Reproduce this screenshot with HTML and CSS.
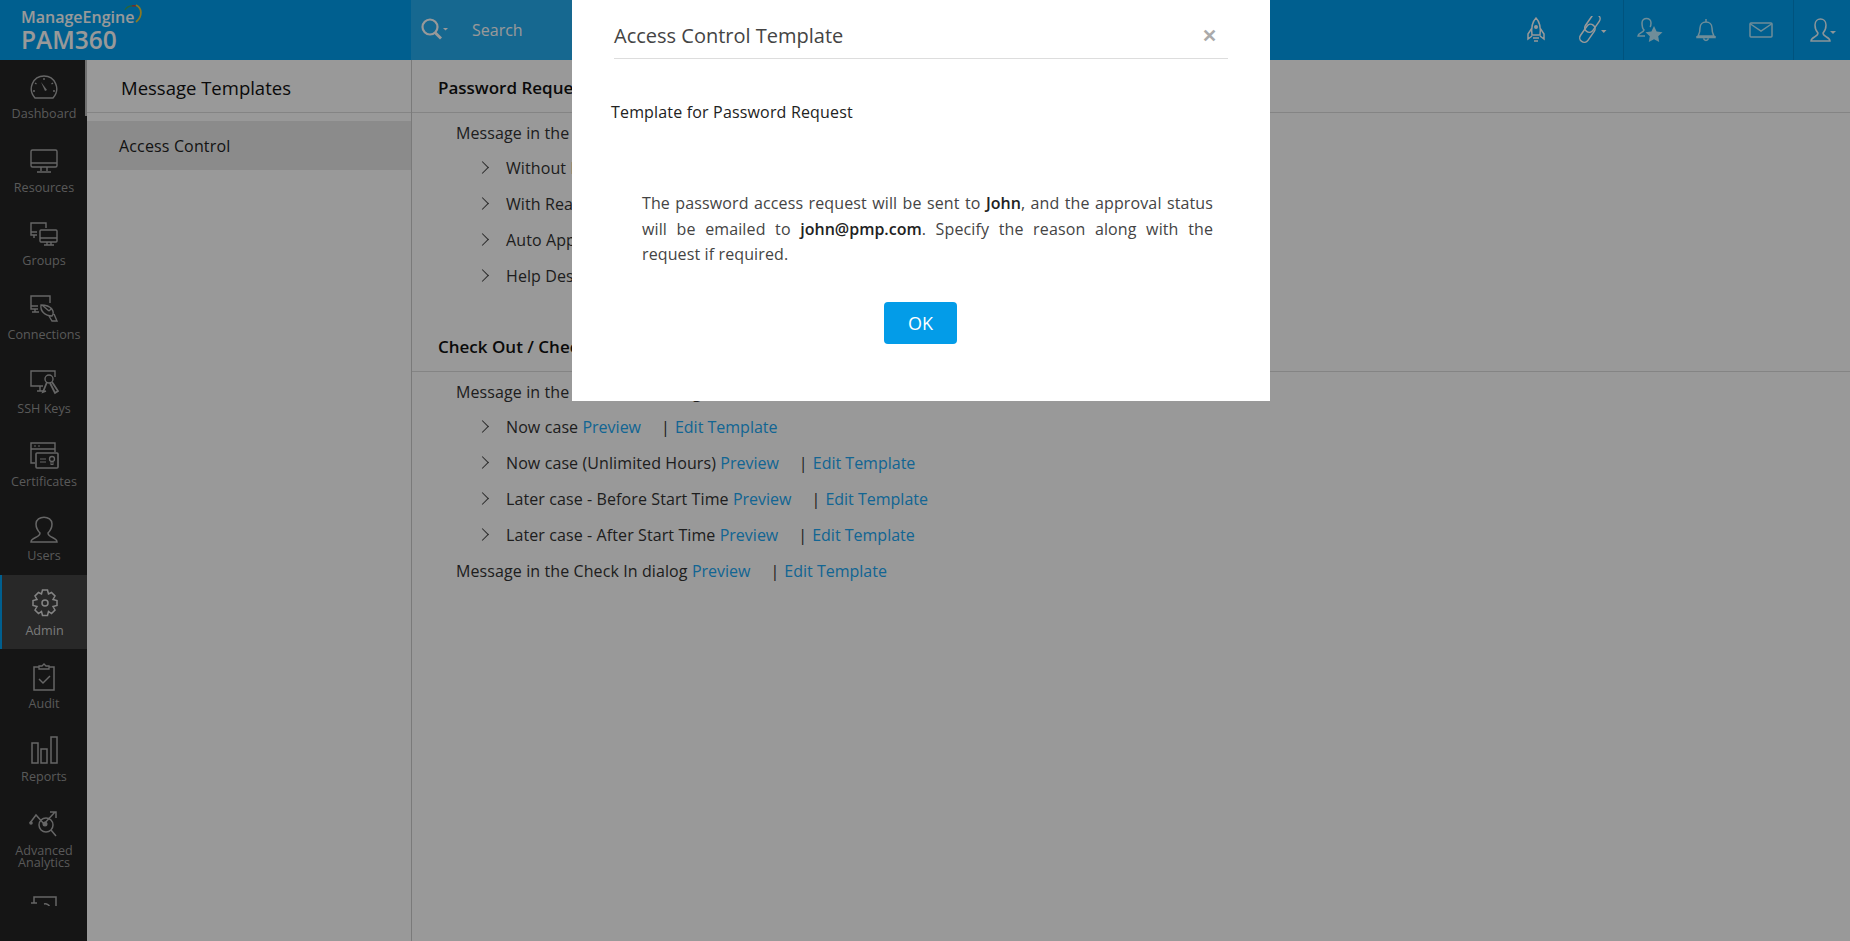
FILE: index.html
```html
<!DOCTYPE html>
<html lang="en">
<head>
    <meta charset="UTF-8">
    <title>PAM360 - Message Templates</title>
    <link rel="stylesheet" href="styles.css">
</head>
<body>
    <!-- Top bar -->
    <header class="topbar">
        <div class="brand">
            <div class="brand-top">ManageEngine<svg class="brand-arc" viewBox="0 0 20 20" width="20" height="20"><path d="M2 6a8 8 0 0 1 7-4" fill="none" stroke="#3fa866" stroke-width="1.4"/><path d="M9 2a8 8 0 0 1 4 0" fill="none" stroke="#c84a3a" stroke-width="1.4"/><path d="M13 1c6 3 7 11 0 17" fill="none" stroke="#e6c83a" stroke-width="1.8"/></svg></div>
            <div class="brand-name">PAM360</div>
        </div>
        <div class="search">
            <svg viewBox="0 0 30 24" width="30" height="24"><circle cx="11" cy="10" r="7.500" fill="none" stroke="#fff" stroke-width="2.200"/><path d="M16 15.500l6 6" stroke="#fff" stroke-width="2.800"/><path d="M24 11h5l-2.500 2.500z" fill="#fff"/></svg>
            <span>Search</span>
        </div>
        <div class="top-icons">
            <div class="top-group top-first">
                <svg viewBox="0 0 24 28" width="24" height="28"><path d="M12 2c4 4 5 9 4 17H8C7 11 8 6 12 2zM8 12l-4 6v5l4-3M16 12l4 6v5l-4-3M9 22h6M10 25h4" fill="none" stroke="#fff" stroke-width="1.500"/><circle cx="12" cy="11" r="2" fill="#fff"/></svg>
                <svg viewBox="0 0 30 28" width="30" height="28"><rect x="11" y="-3" width="9" height="20" rx="4.500" transform="rotate(35 15 7)" fill="none" stroke="#fff" stroke-width="1.500"/><rect x="6" y="7" width="9" height="20" rx="4.500" transform="rotate(35 10 17)" fill="none" stroke="#fff" stroke-width="1.500"/><path d="M24 14h5.500l-2.750 3z" fill="#fff"/></svg>
            </div>
            <div class="top-group top-mid">
                <svg viewBox="0 0 26 26" width="26" height="26"><path d="M8 19H1c0-3 5-3 6-6-2-2-2-5-2-7 0-6 9-6 9 0 0 1 0 3-1 4" fill="none" stroke="#b9ecff" stroke-width="1.500"/><path d="M17 9l2.600 5.400 5.900.8-4.300 4.100 1 5.700-5.200-2.800-5.200 2.800 1-5.700-4.300-4.100 5.900-.8z" fill="#b9ecff"/></svg>
                <svg viewBox="0 0 24 26" width="24" height="26"><path d="M4 19c1-2 2-3 2-8 0-4 3-6 6-6s6 2 6 6c0 5 1 6 2 8zM3 19v1.500h18V19M9.500 21.500c1 2.500 4 2.500 5 0M12 5V2" fill="none" stroke="#b9ecff" stroke-width="1.500"/></svg>
                <svg viewBox="0 0 24 18" width="24" height="18"><rect x="1" y="2" width="22" height="14" rx="1" fill="none" stroke="#b9ecff" stroke-width="1.500"/><path d="M1.500 3l10.500 7 10.500-7" fill="none" stroke="#b9ecff" stroke-width="1.500"/></svg>
            </div>
            <div class="top-group top-last">
                <svg viewBox="0 0 26 26" width="26" height="26"><path d="M1 24c0-4 7-4 7-8-2-2-3-5-3-8 0-8 11-8 11 0 0 3-1 6-3 8 0 4 7 4 7 8z" fill="none" stroke="#e8f8ff" stroke-width="1.500"/><path d="M20 14h6l-3 3z" fill="#e8f8ff"/></svg>
            </div>
        </div>
    </header>

    <div class="main">
        <!-- Left navigation -->
        <aside class="sidenav">
            <div class="nav-thumb"></div>
            <div class="nav-list">
                <a class="nav-item">
                    <svg viewBox="0 0 30 26" width="30" height="26"><path d="M6 24C-2 15 4 2 15 2s17 13 9 22z" fill="none" stroke="currentColor" stroke-width="1.400"/><path d="M12 8l4 9 2-1z" fill="currentColor"/><path d="M15 4v2M6 9l1.500 1M24 9l-1.500 1M4 17h2M24 17h2" stroke="currentColor" stroke-width="1.400"/></svg>
                    <span>Dashboard</span>
                </a>
                <a class="nav-item">
                    <svg viewBox="0 0 30 26" width="30" height="26"><rect x="2" y="2" width="26" height="17" rx="1.500" fill="none" stroke="currentColor" stroke-width="1.400"/><path d="M2 15h26M12 19v4M18 19v4M8 24h14" stroke="currentColor" stroke-width="1.400"/></svg>
                    <span>Resources</span>
                </a>
                <a class="nav-item">
                    <svg viewBox="0 0 30 26" width="30" height="26"><path d="M8 14H2V2h15v5M2 11h6M5 14v3" fill="none" stroke="currentColor" stroke-width="1.400"/><rect x="11" y="9" width="17" height="12" rx="1" fill="none" stroke="currentColor" stroke-width="1.400"/><path d="M11 17h17M18 21v3M22 21v3M15 24h10" stroke="currentColor" stroke-width="1.400"/></svg>
                    <span>Groups</span>
                </a>
                <a class="nav-item">
                    <svg viewBox="0 0 30 28" width="30" height="28"><path d="M9 15H2V2h19v7M2 12h7M6 15v3M3 18h7" fill="none" stroke="currentColor" stroke-width="1.400"/><path d="M12 11c-1 6 4 11 11 11 3-4 0-11-11-11zM13 11l7 6M20 17l3-3M20 22l3 5h5l-3-7" fill="none" stroke="currentColor" stroke-width="1.400"/></svg>
                    <span>Connections</span>
                </a>
                <a class="nav-item">
                    <svg viewBox="0 0 30 26" width="30" height="26"><path d="M14 17H2V2h24v6M8 22h7M11 17v5" fill="none" stroke="currentColor" stroke-width="1.400"/><circle cx="20" cy="10" r="4" fill="none" stroke="currentColor" stroke-width="1.400"/><path d="M18 13l-4 10 3-1M21 14l5 10 3-2-6-9" fill="none" stroke="currentColor" stroke-width="1.800"/></svg>
                    <span>SSH Keys</span>
                </a>
                <a class="nav-item">
                    <svg viewBox="0 0 30 28" width="30" height="28"><path d="M6 22H2V2h24v9M2 8h24" fill="none" stroke="currentColor" stroke-width="1.400"/><rect x="7" y="12" width="22" height="15" rx="1" fill="none" stroke="currentColor" stroke-width="1.600"/><path d="M11 18h6M11 21h6M5 5h2M9 5h2" stroke="currentColor" stroke-width="1.200"/><circle cx="23" cy="18" r="2.500" fill="none" stroke="currentColor" stroke-width="1.300"/><path d="M22 21v3l1-1 1 1v-3" fill="none" stroke="currentColor"/></svg>
                    <span>Certificates</span>
                </a>
                <a class="nav-item">
                    <svg viewBox="0 0 30 28" width="30" height="28"><path d="M2 27c0-5 9-4 9-9-3-3-4-6-4-9 0-9 16-9 16 0 0 3-1 6-4 9 0 5 9 4 9 9z" fill="none" stroke="currentColor" stroke-width="1.500"/></svg>
                    <span>Users</span>
                </a>
                <a class="nav-item active">
                    <svg viewBox="0 0 30 28" width="30" height="28"><path d="M12.500 1h5l1 4 3-1.500 3.500 3.500-2 3.500 4 1v5l-4 1 2 3.500-3.500 3.500-3-2-1 4h-5l-1-4-3 2L5 21l2-3.500-4-1v-5l4-1L5 7l3.500-3.500 3 1.500z" fill="none" stroke="currentColor" stroke-width="1.500"/><circle cx="15" cy="14" r="3" fill="none" stroke="currentColor" stroke-width="1.500"/></svg>
                    <span>Admin</span>
                </a>
                <a class="nav-item">
                    <svg viewBox="0 0 30 28" width="30" height="28"><path d="M10 4H5v23h20V4h-5" fill="none" stroke="currentColor" stroke-width="1.500"/><path d="M10 6V3h3l2-2 2 2h3v3z" fill="none" stroke="currentColor" stroke-width="1.300"/><path d="M10 16l4 4 7-7" fill="none" stroke="currentColor" stroke-width="1.500"/></svg>
                    <span>Audit</span>
                </a>
                <a class="nav-item">
                    <svg viewBox="0 0 30 28" width="30" height="28"><path d="M3 27V7h6v20zM12 27V13h6v14zM22 27V1h6v26z" fill="none" stroke="currentColor" stroke-width="1.500"/></svg>
                    <span>Reports</span>
                </a>
                <a class="nav-item nav-two">
                    <svg viewBox="0 0 30 28" width="30" height="28"><circle cx="17" cy="15" r="7" fill="none" stroke="currentColor" stroke-width="1.500"/><path d="M22 20l5 6M1 13l6-8 8 9 11-12M21 2h6v6" fill="none" stroke="currentColor" stroke-width="1.500"/><circle cx="2" cy="13" r="1.800" fill="currentColor"/><circle cx="16" cy="14" r="2.500" fill="currentColor"/></svg>
                    <span>Advanced Analytics</span>
                </a>
                <a class="nav-item">
                    <svg viewBox="0 0 30 28" width="30" height="28"><path d="M5 8V2h22v24H5M2 8h6M15 9a5 5 0 0 1 6 4" fill="none" stroke="currentColor" stroke-width="1.500"/></svg>
                </a>
            </div>
        </aside>

        <!-- Sub menu -->
        <section class="subnav">
            <h2>Message Templates</h2>
            <div class="subnav-item">Access Control</div>
        </section>

        <!-- Template list -->
        <section class="content">
            <h3>Password Request</h3>
            <div class="rows">
                <p class="row">Message in the Password Request dialog</p>
                <p class="row sub"><span class="chev"></span>Without Reason <a>Preview</a><i>|</i><a>Edit Template</a></p>
                <p class="row sub"><span class="chev"></span>With Reason <a>Preview</a><i>|</i><a>Edit Template</a></p>
                <p class="row sub"><span class="chev"></span>Auto Approve <a>Preview</a><i>|</i><a>Edit Template</a></p>
                <p class="row sub"><span class="chev"></span>Help Desk <a>Preview</a><i>|</i><a>Edit Template</a></p>
            </div>
            <h3 class="second">Check Out / Check In</h3>
            <div class="rows">
                <p class="row">Message in the Check Out dialog</p>
                <p class="row sub"><span class="chev"></span>Now case <a>Preview</a><i>|</i><a>Edit Template</a></p>
                <p class="row sub"><span class="chev"></span>Now case (Unlimited Hours) <a>Preview</a><i>|</i><a>Edit Template</a></p>
                <p class="row sub"><span class="chev"></span>Later case - Before Start Time <a>Preview</a><i>|</i><a>Edit Template</a></p>
                <p class="row sub"><span class="chev"></span>Later case - After Start Time <a>Preview</a><i>|</i><a>Edit Template</a></p>
                <p class="row">Message in the Check In dialog <a>Preview</a><i>|</i><a>Edit Template</a></p>
            </div>
        </section>
    </div>

    <!-- Dialog -->
    <div class="overlay"></div>
    <div class="modal">
        <div class="modal-head">
            <span>Access Control Template</span>
            <span class="modal-close">&#10005;</span>
        </div>
        <div class="modal-sub">Template for Password Request</div>
        <p class="modal-text">The password access request will be sent to <b>John</b>, and the approval status will be emailed to <b>john@pmp.com</b>. Specify the reason along with the request if required.</p>
        <div class="modal-foot"><button class="ok">OK</button></div>
    </div>
</body>
</html>
```

FILE: styles.css
```css
* {
    box-sizing: border-box;
}

html, body {
    height: 100%;
}

body {
    margin: 0;
    font-family: 'Open Sans', sans-serif;
    font-size: 15px;
    color: #333;
    background-color: #fff;
    overflow: hidden;
}

/* Top bar */
.topbar {
    height: 60px;
    display: flex;
    background-color: #009fef;
}

.brand {
    width: 411px;
    padding: 7px 0 0 21px;
    color: #fff;
}

.brand-top {
    position: relative;
    font-size: 16px;
    line-height: 20px;
    font-weight: 600;
}

.brand-arc {
    position: absolute;
    left: 102px;
    top: -3px;
}

.brand-name {
    font-size: 24.5px;
    line-height: 25px;
    font-weight: 600;
}

.search {
    width: 161px;
    display: flex;
    align-items: center;
    gap: 23px;
    padding: 0 0 0 8px;
    background-color: rgba(255, 255, 255, 0.15);
    color: #fff;
    font-size: 16px;
}

.search svg {
    margin-top: -2px;
}

.top-icons {
    margin-left: auto;
    display: flex;
}

.top-group {
    display: flex;
    align-items: center;
    border-left: 1px solid rgba(0, 0, 0, 0.12);
}

.top-first {
    gap: 29px;
    padding: 0 16px 0 0;
    border-left: none;
}

.top-mid {
    gap: 31px;
    padding: 0 19px 0 13px;
    width: 170px;
}

.top-last {
    width: 57px;
    padding: 0 0 0 16px;
}

/* Left navigation */
.main {
    display: flex;
    height: calc(100% - 60px);
}

.sidenav {
    position: relative;
    width: 87px;
    flex: none;
    background-color: #232323;
}

.nav-thumb {
    position: absolute;
    right: 0;
    top: 0;
    width: 2px;
    height: 56px;
    background-color: #bbb;
}

.nav-list {
    height: 847px;
    overflow: hidden;
    margin-top: -1px;
}

.nav-item {
    height: 73.7px;
    display: flex;
    flex-direction: column;
    align-items: center;
    padding: 14px 0 0 1px;
    color: #aaa;
    font-size: 12.6px;
    line-height: 12px;
    text-align: center;
}

.nav-item svg {
    height: 28px;
    flex: none;
}

.nav-item span {
    margin-top: 7px;
    color: #959595;
}

.nav-two {
    height: 85px;
}

.nav-two span {
    padding: 0 4px;
}

.nav-item.active {
    background-color: #434343;
    border-left: 2px solid #009fef;
    padding-left: 0;
    color: #ddd;
}

.nav-item.active span {
    margin-top: 8px;
    color: #ccc;
}

/* Sub menu */
.subnav {
    width: 325px;
    flex: none;
    border-right: 1px solid #ccc;
    background-color: #fff;
}

.subnav h2 {
    margin: 0;
    height: 53px;
    padding: 16px 0 0 34px;
    font-size: 18.5px;
    line-height: 24px;
    font-weight: 400;
    color: #111;
    border-bottom: 1px solid #ddd;
}

.subnav-item {
    margin-top: 8px;
    height: 49px;
    padding: 1px 0 0 32px;
    line-height: 48px;
    font-size: 16px;
    letter-spacing: 0.15px;
    color: #222;
    background-color: #e8e8e8;
}

/* Template list */
.content {
    flex: 1;
    background-color: #fff;
}

.content h3 {
    margin: 0;
    height: 53px;
    padding: 16px 0 0 26px;
    font-size: 17px;
    line-height: 24px;
    font-weight: 600;
    color: #111;
    border-bottom: 1px solid #ddd;
}

.content h3.second {
    margin-top: 25px;
}

.rows {
    padding: 3px 0 0 44px;
}

.row {
    margin: 0;
    height: 36px;
    line-height: 36px;
    font-size: 16px;
    letter-spacing: 0.1px;
    color: #333;
    white-space: nowrap;
}

.row:first-child {
    height: 34px;
    line-height: 34px;
}

.row.sub {
    padding-left: 50px;
    position: relative;
}

.chev {
    position: absolute;
    left: 22px;
    top: 13px;
    width: 9px;
    height: 9px;
    border-top: 1px solid #444;
    border-right: 1px solid #444;
    transform: rotate(45deg);
}

.row a {
    color: #20a8f5;
    letter-spacing: 0;
}

.row i {
    font-style: normal;
    margin: 0 5px 0 20px;
}

/* Dialog */
.overlay {
    position: fixed;
    left: 0;
    top: 0;
    right: 0;
    bottom: 0;
    background-color: rgba(0, 0, 0, 0.4);
}

.modal {
    position: fixed;
    left: 572px;
    top: 0;
    width: 698px;
    height: 401px;
    background-color: #fff;
    padding: 0 42px 0 39px;
}

.modal-head {
    margin-left: 3px;
    height: 59px;
    padding-top: 12px;
    display: flex;
    justify-content: space-between;
    align-items: center;
    font-size: 20px;
    color: #444;
    border-bottom: 1px solid #ddd;
}

.modal-close {
    font-size: 18px;
    font-weight: 700;
    color: #aaa;
    margin-right: 11px;
}

.modal-sub {
    margin-top: 41px;
    font-size: 16px;
    line-height: 24px;
    letter-spacing: 0.17px;
    color: #222;
}

.modal-text {
    margin: 67px 15px 0 31px;
    font-size: 16px;
    line-height: 25.5px;
    letter-spacing: 0.12px;
    text-align: justify;
    color: #444;
}

.modal-text b {
    font-weight: 600;
    letter-spacing: 0;
    color: #222;
}

.modal-foot {
    margin-top: 34px;
    padding-left: 2px;
    text-align: center;
}

.ok {
    width: 73px;
    height: 42px;
    border: none;
    border-radius: 4px;
    background-color: #039ce8;
    color: #fff;
    font-family: 'Open Sans', sans-serif;
    font-size: 18px;
}
```
